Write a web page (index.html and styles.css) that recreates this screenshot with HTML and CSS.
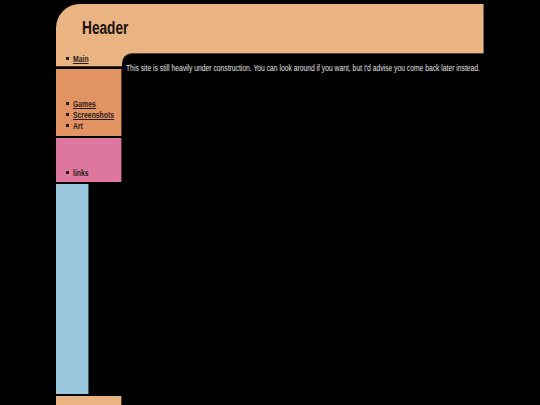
FILE: index.html
```html
<!DOCTYPE html>
<html>
<head>
<meta charset="utf-8">
<title>Header</title>
<link rel="stylesheet" href="styles.css">
</head>
<body>
<div class="page">
  <div class="header"><h1 class="title">Header</h1></div>
  <div class="frame">
    <nav class="sidebar">
      <div class="box box-main">
        <ul class="menu"><li><a class="label" href="#">Main</a></li></ul>
      </div>
      <div class="box box-games">
        <ul class="menu">
          <li><a class="label" href="#">Games</a></li>
          <li><a class="label" href="#">Screenshots</a></li>
          <li><span class="label">Art</span></li>
        </ul>
      </div>
      <div class="box box-links">
        <ul class="menu"><li><span class="label">links</span></li></ul>
      </div>
      <div class="box box-blue"></div>
      <div class="box box-foot"></div>
    </nav>
    <main class="content">
      <p class="notice">This site is still heavily under construction. You can look around if you want, but I'd advise you come back later instead.</p>
    </main>
  </div>
</div>
</body>
</html>
```
FILE: styles.css
```css
html, body {
  margin: 0;
  padding: 0;
  background: #000;
  height: 100%;
  overflow: hidden;
}
body {
  font-family: "Liberation Sans", Arial, sans-serif;
}
.page {
  margin-left: 56px;
  padding-top: 4px;
  width: 428px;
}
.header {
  height: 49px;
  box-sizing: border-box;
  background: #eab482;
  border-top-left-radius: 24px;
  border-right: 1px solid #8a6444;
  padding-left: 26px;
  padding-top: 14px;
}
.title {
  margin: 0;
  width: max-content;
  font-size: 18px;
  line-height: 20px;
  font-weight: bold;
  color: #1a120c;
  white-space: nowrap;
  transform: scaleX(0.76);
  transform-origin: left center;
}
.frame {
  display: grid;
  grid-template-columns: 66px minmax(0, 1fr);
  background: linear-gradient(#eab482, #eab482) no-repeat 66px 0 / 14px 14px;
}
.sidebar {
  display: flex;
  flex-direction: column;
  gap: 2px;
  background: #000;
}
.box {
  box-sizing: border-box;
  display: flex;
  flex-direction: column;
  justify-content: flex-end;
}
.box-main {
  height: 14px;
  background: #eab482;
  border-bottom: 1px solid #4a3020;
  justify-content: flex-start;
  padding-top: 1px;
}
.box-games {
  height: 67px;
  background: #e29363;
  border-right: 1px solid #5a3a24;
  padding-bottom: 4px;
}
.box-links {
  height: 44px;
  background: #dd77a0;
  border-right: 1px solid #5a2a3c;
  padding-bottom: 3px;
}
.box-blue {
  width: 33px;
  height: 210px;
  background: #9bc8de;
  border-right: 1px solid #3a5866;
}
.box-foot {
  height: 12px;
  background: #eab482;
  border-right: 1px solid #5a3a24;
}
.menu {
  list-style: none;
  margin: 0;
  padding: 0 0 0 10px;
  font-size: 9px;
  line-height: 11px;
  font-weight: bold;
  white-space: nowrap;
}
.menu li::before {
  content: "";
  display: inline-block;
  width: 3px;
  height: 3px;
  background: #2a1c14;
  margin-right: 4px;
  vertical-align: 2px;
}
.label {
  display: inline-block;
  color: #2a1c14;
  transform: scaleX(0.76);
  transform-origin: left center;
}
a.label {
  text-decoration: underline;
}
.content {
  background: #000;
  border-top-left-radius: 10px;
  border-top: 1px solid #5a4028;
  min-height: 340px;
  padding: 9px 4px 0 4px;
  overflow: visible;
}
.notice {
  margin: 0;
  width: max-content;
  color: #e2e2e2;
  font-size: 9px;
  line-height: 11px;
  white-space: nowrap;
  transform: scaleX(0.75);
  transform-origin: left center;
}
```
